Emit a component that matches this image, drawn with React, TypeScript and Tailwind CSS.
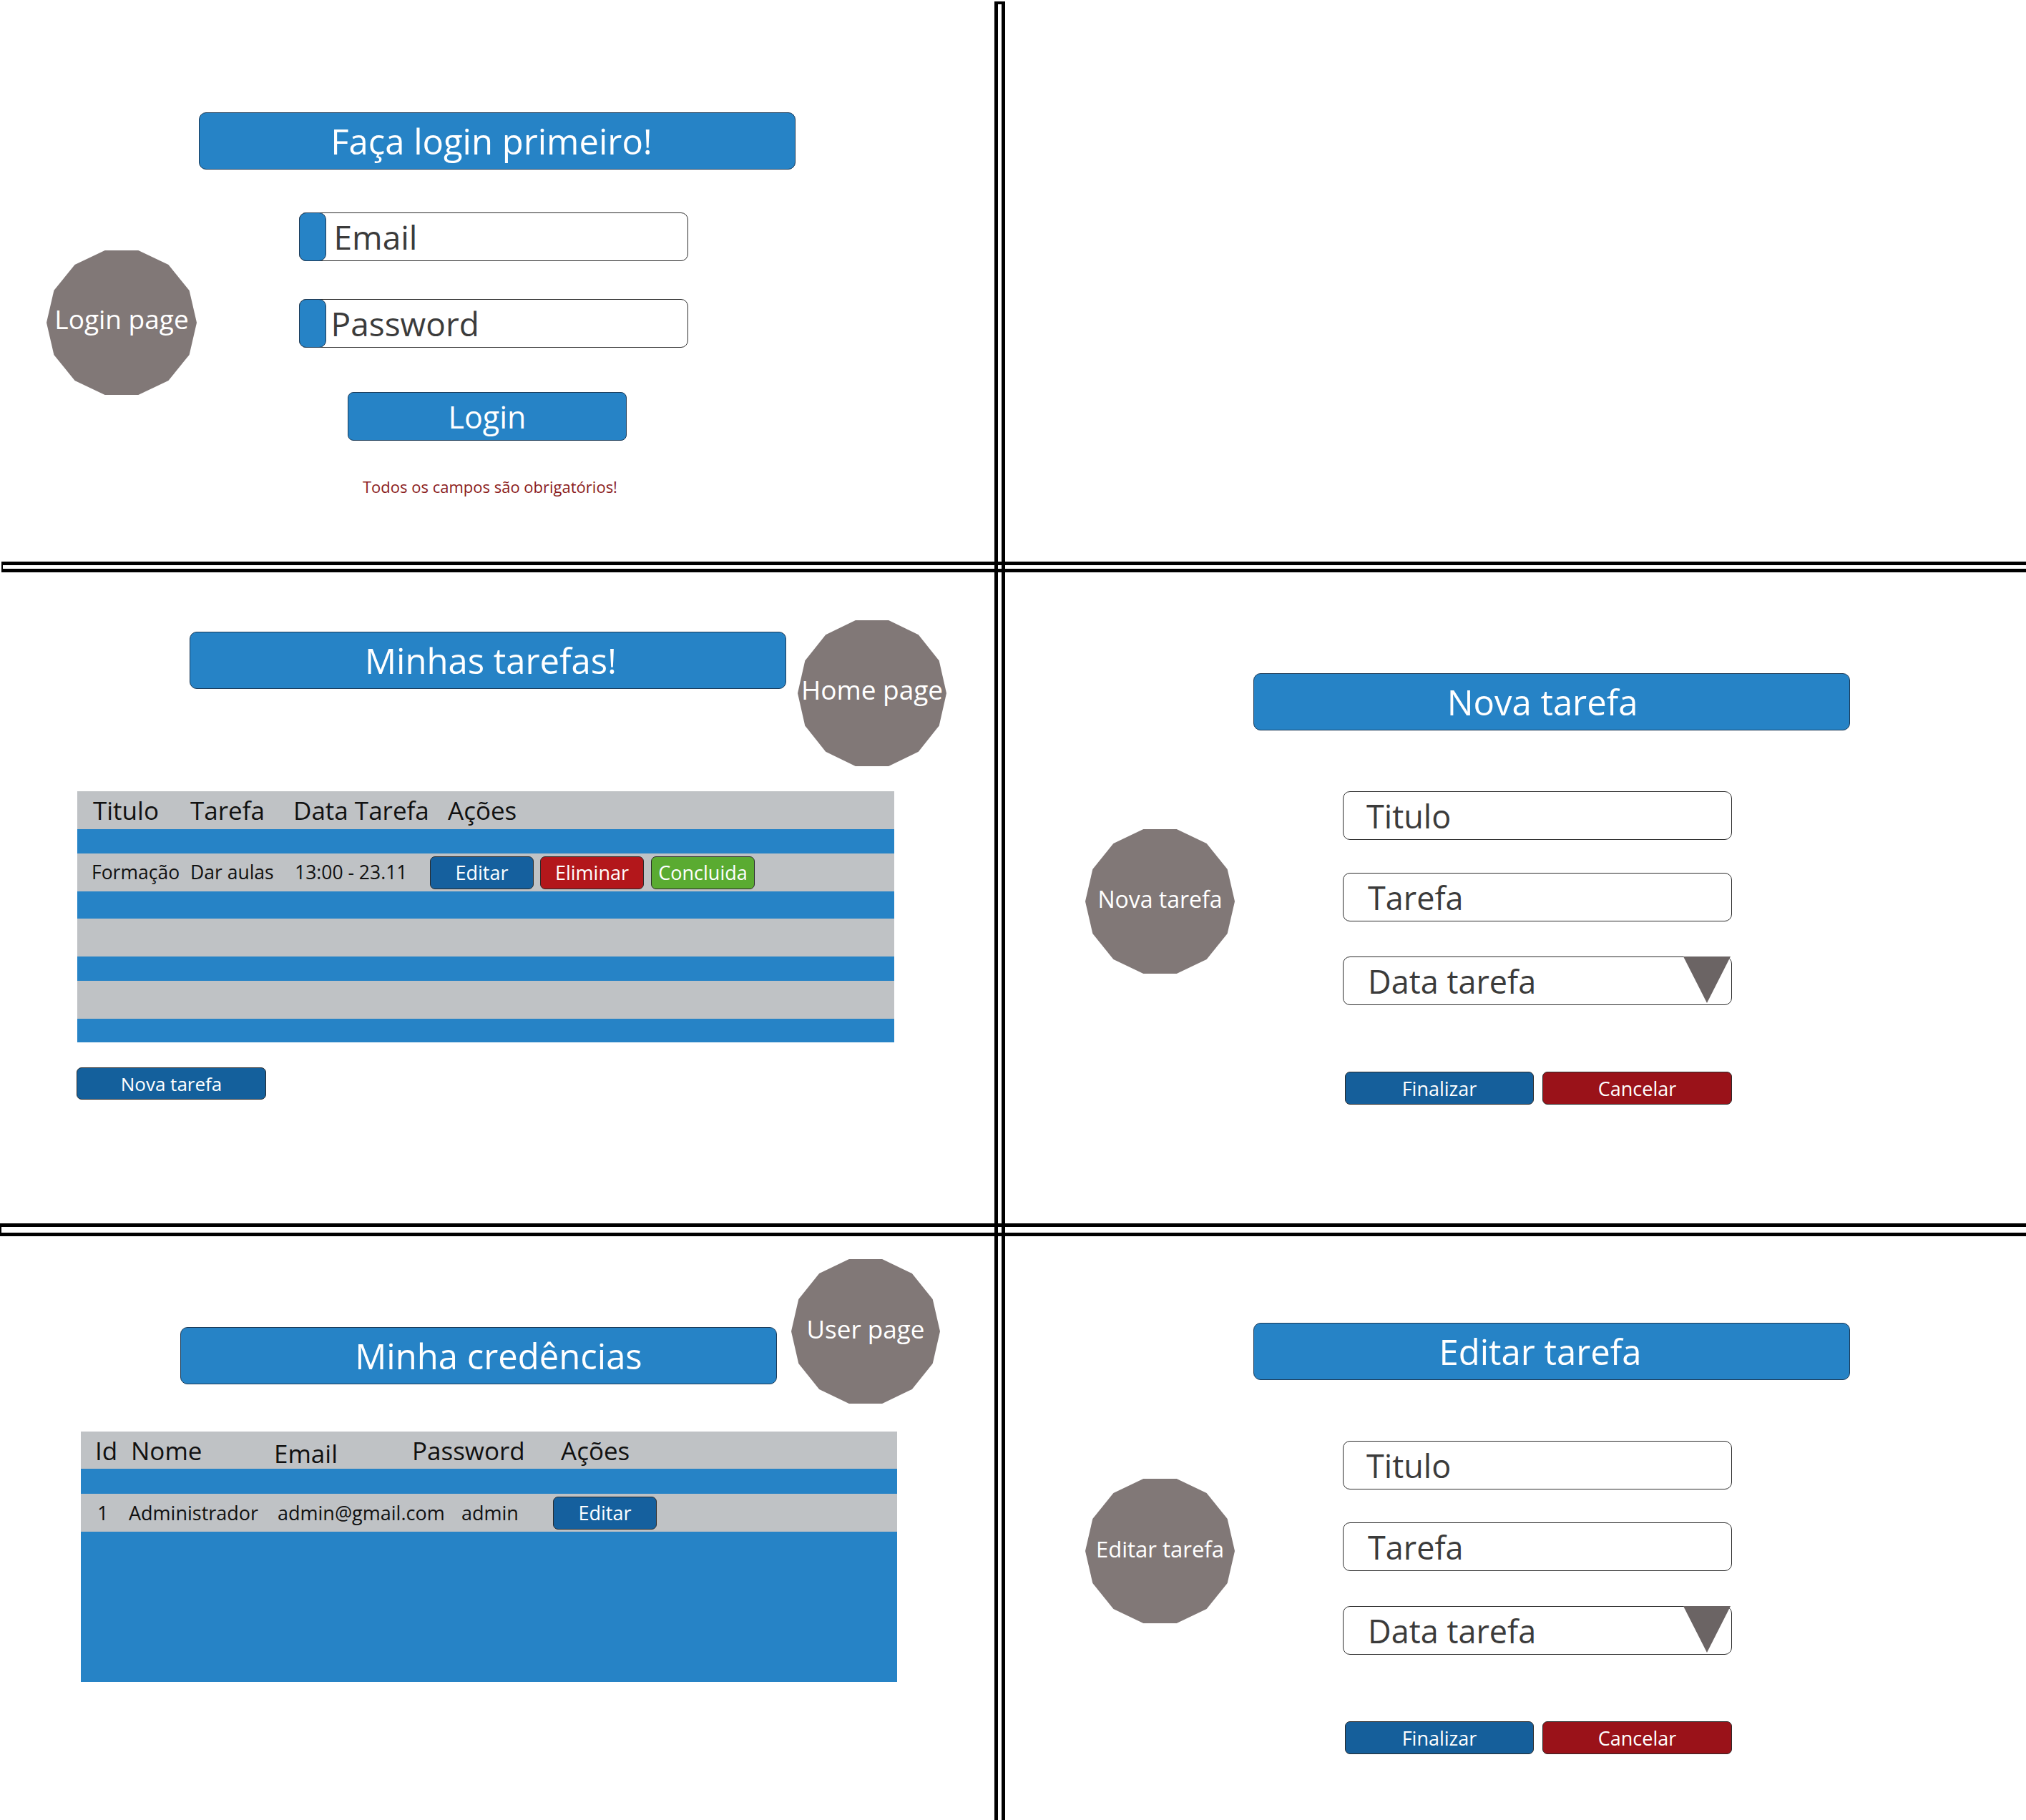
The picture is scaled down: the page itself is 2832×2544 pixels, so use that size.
import React from "react";

// 14-sided badge used as page label
const BADGE_POINTS =
  "100,50 95.05,27.75 81.17,9.91 61.13,0 38.87,0 18.83,9.91 4.95,27.75 0,50 4.95,72.25 18.83,90.09 38.87,100 61.13,100 81.17,90.09 95.05,72.25";

function Badge({
  label,
  className = "",
  textClass = "text-[34px] -mt-[6px]",
}: {
  label: string;
  className?: string;
  textClass?: string;
}) {
  return (
    <div className={`relative flex shrink-0 items-center justify-center ${className}`}>
      <svg className="absolute inset-0 h-full w-full" viewBox="0 0 100 100" preserveAspectRatio="none">
        <polygon points={BADGE_POINTS} fill="#817877" />
      </svg>
      <span className={`relative whitespace-nowrap leading-none text-white ${textClass}`}>{label}</span>
    </div>
  );
}

function TitleBar({ children, className = "" }: { children: React.ReactNode; className?: string }) {
  return (
    <div
      className={`flex h-[80px] w-[834px] shrink-0 items-center justify-center rounded-[10px] border-[1.5px] border-[#1b3a57] bg-[#2683c6] text-[49px] leading-none text-white ${className}`}
    >
      {children}
    </div>
  );
}

function LoginInput({ label, className = "", textClass = "" }: { label: string; className?: string; textClass?: string }) {
  return (
    <div
      className={`flex h-[68px] w-[544px] items-center rounded-[10px] border-[1.5px] border-[#2b2b2b] bg-white ${className}`}
    >
      <div className="-my-[1.5px] -ml-[1.5px] h-[68px] w-[38px] rounded-[10px] border-[1.5px] border-[#1f3a55] bg-[#2683c6]" />
      <span className={`text-[46px] leading-none text-[#3b3b3b] ${textClass}`}>{label}</span>
    </div>
  );
}

function Field({
  label,
  className = "",
  textClass = "pl-[32px]",
  dropdown = false,
}: {
  label: string;
  className?: string;
  textClass?: string;
  dropdown?: boolean;
}) {
  return (
    <div
      className={`relative flex h-[68px] w-[544px] items-center rounded-[10px] border-[1.5px] border-[#2b2b2b] bg-white ${className}`}
    >
      <span className={`text-[45px] leading-none text-[#3b3b3b] ${textClass}`}>{label}</span>
      {dropdown && (
        <svg className="absolute -top-[1.5px] right-[1px] h-[66px] w-[66px]" viewBox="0 0 66 66">
          <polygon points="0,0 66,0 33,65" fill="#6b6464" />
        </svg>
      )}
    </div>
  );
}

function Btn({ children, className = "" }: { children: React.ReactNode; className?: string }) {
  return (
    <div
      className={`flex shrink-0 items-center justify-center rounded-[7px] border border-[#2a2a2a] leading-none text-white ${className}`}
    >
      {children}
    </div>
  );
}

function TaskForm() {
  return (
    <div className="ml-[151px] mt-[85px] flex w-[544px] flex-col">
      <Field label="Titulo" />
      <Field label="Tarefa" className="mt-[46px]" textClass="pl-[34px]" />
      <Field label="Data tarefa" className="mt-[49px]" textClass="pl-[34px]" dropdown />
      <div className="mt-[93px] flex gap-[12px] pl-[3px]">
        <Btn className="h-[46px] w-[264px] bg-[#155f9b] text-[27px]">Finalizar</Btn>
        <Btn className="h-[46px] w-[265px] bg-[#9a1219] text-[27px]">Cancelar</Btn>
      </div>
    </div>
  );
}

export default function App() {
  return (
    <div className="grid h-[2544px] w-[2832px] grid-cols-[1390px_15px_1427px] grid-rows-[785px_15px_910px_18px_816px] overflow-hidden bg-white font-['Open_Sans',sans-serif]">
      {/* Login page */}
      <section className="col-start-1 row-start-1 flex items-start pt-[157px]">
        <Badge label="Login page" className="ml-[65px] mt-[193px] h-[202px] w-[210px]" textClass="-mt-[12px] text-[37px]" />
        <div className="ml-[3px] flex w-[834px] flex-col">
          <TitleBar className="pr-[16px]">Faça login primeiro!</TitleBar>
          <LoginInput label="Email" className="ml-[140px] mt-[60px]" textClass="ml-[11px]" />
          <LoginInput label="Password" className="ml-[140px] mt-[53px]" textClass="ml-[7px]" />
          <div className="ml-[208px] mt-[62px] flex h-[68px] w-[390px] items-center justify-center rounded-[8px] border-[1.5px] border-[#1b3a57] bg-[#2683c6] text-[43px] leading-none text-white">
            Login
          </div>
          <p className="ml-[229px] mt-[53px] text-[22px] leading-none text-[#8b1c1c]">
            Todos os campos são obrigatórios!
          </p>
        </div>
      </section>

      {/* Home page */}
      <section className="col-start-1 row-start-3 flex flex-col">
        <div className="flex items-start pt-[67px]">
          <TitleBar className="ml-[265px] mt-[16px] pl-[8px] text-[47px]">Minhas tarefas!</TitleBar>
          <Badge label="Home page" className="ml-[16px] h-[204px] w-[208px]" textClass="-mt-[12px] text-[37px]" />
        </div>
        <div className="ml-[108px] mt-[35px] w-[1142px] text-[#111]">
          <div className="flex h-[53px] items-center bg-[#bfc2c5] pl-[22px] text-[35px] leading-none">
            <span className="w-[136px]">Titulo</span>
            <span className="w-[144px]">Tarefa</span>
            <span className="w-[216px]">Data Tarefa</span>
            <span>Ações</span>
          </div>
          <div className="h-[34px] bg-[#2683c6]" />
          <div className="flex h-[53px] items-center bg-[#bfc2c5] pl-[20px] text-[26.5px] leading-none">
            <span className="w-[138px]">Formação</span>
            <span className="w-[146px]">Dar aulas</span>
            <span className="w-[189px]">13:00 - 23.11</span>
            <Btn className="h-[46px] w-[145px] bg-[#15609e] text-[27px]">Editar</Btn>
            <Btn className="ml-[9px] h-[46px] w-[145px] bg-[#b3171b] text-[27px]">Eliminar</Btn>
            <Btn className="ml-[10px] h-[46px] w-[145px] bg-[#5aab31] text-[27px]">Concluida</Btn>
          </div>
          <div className="h-[38px] bg-[#2683c6]" />
          <div className="h-[53px] bg-[#bfc2c5]" />
          <div className="h-[34px] bg-[#2683c6]" />
          <div className="h-[53px] bg-[#bfc2c5]" />
          <div className="h-[33px] bg-[#2683c6]" />
        </div>
        <Btn className="ml-[107px] mt-[35px] h-[45px] w-[265px] bg-[#14609c] text-[26px]">Nova tarefa</Btn>
      </section>

      {/* Nova tarefa */}
      <section className="col-start-3 row-start-3 flex flex-col">
        <TitleBar className="ml-[347px] mt-[141px] pr-[26px] text-[48px]">Nova tarefa</TitleBar>
        <div className="flex items-start">
          <Badge label="Nova tarefa" className="ml-[112px] mt-[138px] h-[202px] w-[209px]" textClass="-mt-[6px] text-[32px]" />
          <TaskForm />
        </div>
      </section>

      {/* User page */}
      <section className="col-start-1 row-start-5 flex flex-col">
        <div className="flex items-start pt-[32px]">
          <TitleBar className="ml-[252px] mt-[95px] pl-[56px]">Minha credências</TitleBar>
          <Badge label="User page" className="ml-[20px] h-[202px] w-[208px]" textClass="-mt-[8px] text-[35px]" />
        </div>
        <div className="ml-[113px] mt-[39px] w-[1141px] text-[#111]">
          <div className="flex h-[52px] items-center bg-[#bfc2c5] pl-[20px] text-[35px] leading-none">
            <span className="w-[50px]">Id</span>
            <span className="w-[200px]">Nome</span>
            <span className="mt-[8px] w-[193px]">Email</span>
            <span className="w-[208px]">Password</span>
            <span>Ações</span>
          </div>
          <div className="h-[35px] bg-[#2683c6]" />
          <div className="flex h-[53px] items-center bg-[#bfc2c5] pl-[23px] text-[27px] leading-none">
            <span className="w-[44px]">1</span>
            <span className="w-[208px]">Administrador</span>
            <span className="w-[257px]">admin@gmail.com</span>
            <span className="w-[128px]">admin</span>
            <Btn className="h-[46px] w-[145px] bg-[#15609e] text-[27px]">Editar</Btn>
          </div>
          <div className="h-[210px] bg-[#2683c6]" />
        </div>
      </section>

      {/* Editar tarefa */}
      <section className="col-start-3 row-start-5 flex flex-col">
        <TitleBar className="ml-[347px] mt-[121px] pr-[32px] text-[48px]">Editar tarefa</TitleBar>
        <div className="flex items-start">
          <Badge label="Editar tarefa" className="ml-[112px] mt-[138px] h-[202px] w-[209px]" textClass="-mt-[6px] text-[31px]" />
          <TaskForm />
        </div>
      </section>

      {/* dividers */}
      <div className="col-span-full row-start-2 ml-[2px] border-y-[5px] border-l-2 border-black" />
      <div className="col-span-full row-start-4 border-y-[5px] border-l-2 border-black" />
      <div className="col-start-2 row-span-full mt-[2px] border-x-[5px] border-t-[4px] border-black" />
    </div>
  );
}
